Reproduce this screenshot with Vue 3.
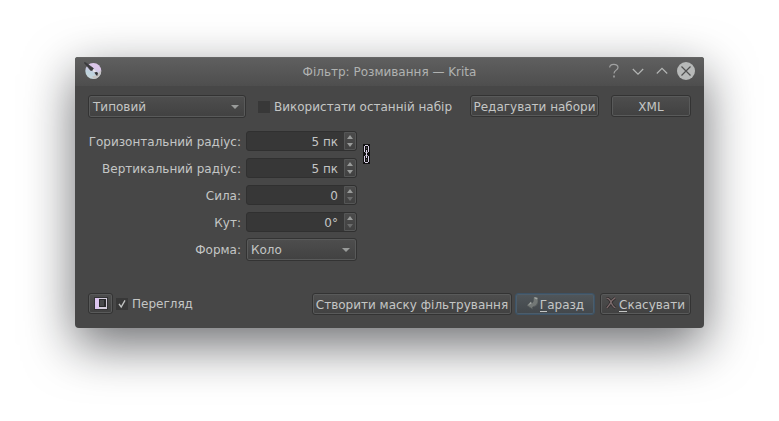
<script setup>
import { ref } from 'vue'

const fields = ref([
  { label: 'Горизонтальний радіус:', value: '5 пк', atMin: false },
  { label: 'Вертикальний радіус:', value: '5 пк', atMin: false },
  { label: 'Сила:', value: '0', atMin: true },
  { label: 'Кут:', value: '0°', atMin: true },
])
</script>

<template>
  <main class="desktop">
    <section class="window">
      <header class="titlebar">
        <svg class="logo" width="18" height="18" viewBox="0 0 18 18">
          <defs>
            <linearGradient id="disc" x1="0.7" y1="0" x2="0.35" y2="1">
              <stop offset="0.3" stop-color="#dcc6ea" />
              <stop offset="0.65" stop-color="#bdd3de" />
              <stop offset="1" stop-color="#c9d6da" />
            </linearGradient>
          </defs>
          <circle cx="9.3" cy="9" r="8" fill="url(#disc)" />
          <path d="M17 8A8 8 0 0 1 10 17L8 14.5L13 13Z" fill="#c5c3c2" />
          <path d="M0 0.6L1.8 0.8L9.4 6.3L8.8 8.6L6.6 8.4Z" fill="#3b3b3e" stroke="#3b3b3e" stroke-width=".6" />
          <path d="M8.9 7.6L11.4 10.2" stroke="#e6e4e8" stroke-width="1.8" />
          <path d="M10.3 10.6Q13 9 14 11.3L13.2 14Q11.6 13 10.3 10.6Z" fill="#333336" />
        </svg>
        <h1 class="title">Фільтр: Розмивання — Krita</h1>
        <div class="controls">
          <svg width="91" height="20" viewBox="0 0 91 20" fill="none" stroke="#b4b6b5" stroke-width="1.2">
            <g stroke="#a0a1a1">
              <path d="M5.7 6.6C5.7 3.7 7.5 3.3 9.7 3.3C12.5 3.3 14 4.5 14 6.4C14 9.3 10 9 10 12.5" />
              <path d="M10 14.6V16.4" stroke-width="1.6" />
            </g>
            <path d="M28.8 8L34 13.2L39.2 8" />
            <path d="M52.8 12.5L58 7.3L63.2 12.5" />
            <circle cx="82" cy="10" r="9" fill="#b7b9b8" stroke="none" />
            <path d="M77.5 5.5L86.5 14.5M86.5 5.5L77.5 14.5" stroke="#505050" />
          </svg>
        </div>
      </header>

      <div class="body">
        <div class="presets">
          <div class="button combo wide"><span>Типовий</span><i class="arrow"></i></div>
          <label class="check last"><i class="box"></i><span>Використати останній набір</span></label>
          <button class="button edit">Редагувати набори</button>
          <button class="button xml">XML</button>
        </div>

        <div class="settings">
          <div class="form">
            <template v-for="field in fields" :key="field.label">
              <span class="label spin-label">{{ field.label }}</span>
              <div class="spin">
                <span class="value">{{ field.value }}</span>
                <span class="steps">
                  <i class="up"></i>
                  <i class="down" :class="{ off: field.atMin }"></i>
                </span>
              </div>
            </template>
            <span class="label">Форма:</span>
            <div class="button combo shape"><span>Коло</span><i class="arrow"></i></div>
          </div>
          <svg class="chain" width="7" height="20" viewBox="0 0 7 20" fill="none">
            <g stroke="#111" stroke-width="3">
              <path d="M1.5 8.5V1.5H5.5V8.5Z" />
              <path d="M1.5 11.5V18.5H5.5V11.5Z" />
              <path d="M3.5 5V15" />
            </g>
            <g stroke="#d9d0e6" stroke-width="1">
              <path d="M1.5 8V2M5.5 8V2M2 1.5H5M2 8.5H2.6M4.4 8.5H5" />
              <path d="M1.5 12V18M5.5 12V18M2 18.5H5M2 11.5H2.6M4.4 11.5H5" />
              <path d="M3.5 6V14" />
            </g>
          </svg>
        </div>

        <footer class="actions">
          <button class="button panel">
            <svg width="14" height="13" viewBox="0 0 14 13">
              <rect width="14" height="13" fill="#333335" />
              <rect x="1" y="1" width="12" height="11" fill="#d3ccdb" />
              <rect x="1" y="1" width="4" height="11" fill="#dcc5ef" />
              <rect x="5" y="2" width="7" height="8" fill="#29292b" />
              <rect x="6" y="3" width="4" height="6" fill="#47484a" />
            </svg>
          </button>
          <label class="check preview">
            <i class="box">
              <svg width="12" height="12" viewBox="0 0 12 12" fill="none" stroke="#c0c2c1" stroke-width="1.4">
                <path d="M3 5.8L5.2 9L9 2.4" />
              </svg>
            </i>
            <span>Перегляд</span>
          </label>
          <button class="button mask">Створити маску фільтрування</button>
          <button class="button ok">
            <svg width="13" height="14" viewBox="0 0 13 14">
              <path d="M7.4 1.8L9 .9L12 1.6V6.2Q11 10.6 6.6 11V13.2L.8 9.4L5 5.2L5.8 7.2Q7.8 6.4 7.4 1.8Z" fill="#737876" stroke="#4f5556" stroke-width=".7" />
              <path d="M7.8 1.8L9 1.2L11.8 2L10.4 3.6ZM5 5.8L5.6 7.6L2 9.2Z" fill="#a3a7a5" />
            </svg>
            <span><u>Г</u>аразд</span>
          </button>
          <button class="button cancel">
            <svg width="12" height="14" viewBox="0 0 12 14" fill="none">
              <path d="M1.6 2.4Q4.5 2 6 6.5Q8 11 10.4 11.8M10.4 1.7Q6.5 4 5 8L1.8 12.2" stroke="#2f2b2c" stroke-width="2.8" />
              <path d="M1.6 2.4Q4.5 2 6 6.5Q8 11 10.4 11.8M10.4 1.7Q6.5 4 5 8L1.8 12.2" stroke="#7b6a6b" stroke-width="1.4" />
            </svg>
            <span><u>С</u>касувати</span>
          </button>
        </footer>
      </div>
    </section>
  </main>
</template>

<style>
body {
  background: #fff;
  overflow: hidden;
}
</style>

<style scoped>
* {
  box-sizing: border-box;
}

.desktop {
  height: 421px;
  padding: 57px 75px 93px;
  font: 12px/14px 'DejaVu Sans', sans-serif;
  color: #c4c6c5;
  background: #fff;
}

.window {
  display: flex;
  flex-direction: column;
  width: 629px;
  height: 271px;
  border-radius: 3px 3px 4px 4px;
  background: #474747;
  box-shadow: 0 17px 50px rgba(12, 14, 18, 0.6);
  overflow: hidden;
}

.titlebar {
  display: grid;
  grid-template-columns: 100px 1fr 100px;
  align-items: center;
  height: 29px;
  flex: none;
  background: linear-gradient(#5f5f5f, #4e4e4e);
  border-top: 1px solid #656565;
}

.logo {
  margin: -2px 0 0 9px;
}

.title {
  margin: 0;
  font: inherit;
  text-align: center;
  color: #b0b2b1;
  white-space: nowrap;
}

.controls {
  display: flex;
  margin-top: -2px;
}

.body {
  display: flex;
  flex-direction: column;
  flex: 1;
  padding: 9px 13px 13px;
}

.button {
  display: flex;
  align-items: center;
  justify-content: center;
  height: 22px;
  padding: 1px 0 0;
  border: 1px solid #333;
  border-radius: 3px;
  background: linear-gradient(#4e4e4e, #414141);
  box-shadow: inset 0 0 0 1px #595a5a;
  font: inherit;
  color: inherit;
  white-space: nowrap;
}

.combo {
  height: 23px;
  justify-content: space-between;
  padding: 0 6px 0 4px;
}

.arrow {
  border: solid transparent;
  border-width: 4px 4px 0;
  border-top-color: #999b9a;
}

.presets {
  display: flex;
}

.wide {
  width: 158px;
}

.check {
  display: flex;
  align-items: center;
  gap: 4px;
}

.box {
  display: flex;
  width: 12px;
  height: 12px;
  background: #383838;
}

.last {
  margin-left: 12px;
  width: 212px;
  white-space: nowrap;
}

.edit {
  width: 129px;
}

.xml {
  width: 80px;
  margin-left: auto;
}

.settings {
  display: flex;
  gap: 6px;
  margin-top: 13px;
}

.form {
  display: grid;
  grid-template-columns: 153px 111px;
  grid-template-rows: repeat(4, 20px) 22px;
  column-gap: 5px;
  row-gap: 7px;
}

.label {
  align-self: center;
  text-align: right;
  white-space: nowrap;
}

.spin-label {
  padding-top: 2px;
}

.shape {
  margin-top: -1px;
}

.spin {
  display: flex;
  border: 1px solid #303030;
  border-radius: 3px;
  background: #373737;
}

.value {
  flex: 1;
  padding: 3px 6px 0 0;
  text-align: right;
}

.steps {
  display: flex;
  flex-direction: column;
  align-items: center;
  justify-content: center;
  gap: 4px;
  width: 12px;
  border: 1px solid #555656;
  border-radius: 0 2px 2px 0;
  background: linear-gradient(#4b4b4b, #414141);
}

.up,
.down {
  border: solid transparent;
  border-width: 0 3.5px 4px;
  border-bottom-color: #999b9a;
}

.down {
  border-width: 4px 3.5px 0;
  border-top-color: #999b9a;
}

.down.off {
  border-top-color: #6b6c6c;
}

.chain {
  margin-top: 13px;
}

.actions {
  display: flex;
  height: 22px;
  margin-top: auto;
}

.panel {
  width: 25px;
  height: 21px;
  padding: 0;
}

.preview {
  height: 21px;
  margin-left: 3px;
}

.mask {
  width: 200px;
  margin-left: auto;
}

.ok {
  width: 80px;
  margin-left: 3px;
  gap: 1px;
  border-color: #3d5366;
  background: linear-gradient(#50565a, #42474b);
  box-shadow: inset 0 0 0 1px #4c5d6b;
}

.ok svg,
.cancel svg {
  margin-top: -3px;
}

.cancel {
  width: 91px;
  margin-left: 5px;
  padding-right: 1px;
  gap: 2px;
}

u {
  text-decoration: none;
  box-shadow: inset 0 -1px #c4c6c5;
}
</style>
